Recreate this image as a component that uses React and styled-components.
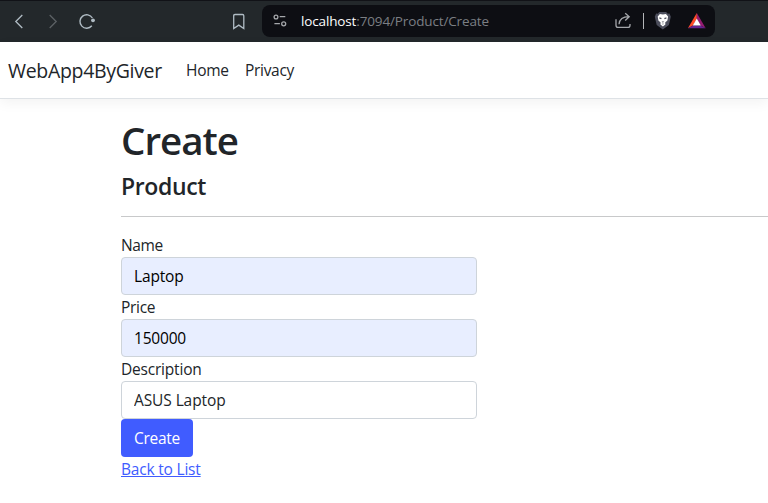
import React from "react";
import styled, { createGlobalStyle } from "styled-components";

const GlobalStyle = createGlobalStyle`
  *, *::before, *::after { box-sizing: border-box; }
  html, body { margin: 0; background: #fff; overflow: hidden; }
  body {
    font-family: "Open Sans", "Noto Sans", sans-serif;
    font-size: 15.5px;
    line-height: 24px;
    color: #212529;
  }
`;

const Page = styled.div`
  width: 100%;
  height: 503px;
  overflow: hidden;
`;

const BrowserBar = styled.div`
  display: flex;
  align-items: center;
  height: 42px;
  border-top: 1px solid #111217;
  background: #23282b;
`;

const ToolButton = styled.span`
  display: flex;
  flex: none;
  width: 20px;
  height: 20px;
  margin-left: ${(p) => p.$gap}px;
`;

const AddressBar = styled.div`
  display: flex;
  align-items: center;
  width: 453px;
  height: 32px;
  margin: -1px 0 0 13px;
  padding-right: 8px;
  border-radius: 8px;
  background: #0d0e13;
`;

const Address = styled.span`
  flex: 1;
  margin: 0 0 0 11px;
  font-size: 13.5px;
  letter-spacing: ${(p) => p.$spacing}px;
  line-height: 20px;
  color: #7b7e83;
`;

const Host = styled.span`
  color: #fff;
`;

const Separator = styled.span`
  width: 1px;
  height: 16px;
  margin: 0 0 0 10px;
  background: #b3b5b8;
`;

const Navbar = styled.nav`
  display: flex;
  align-items: center;
  height: 57px;
  padding-left: 8px;
  border-bottom: 1px solid #dee2e6;
  box-shadow: 0 4px 12px rgba(0, 0, 0, 0.05);
`;

const Brand = styled.a`
  width: 178px;
  padding-top: 2px;
  font-size: 19.5px;
  line-height: 30px;
  letter-spacing: ${(p) => p.$spacing}px;
`;

const NavLink = styled.a`
  width: 59px;
  letter-spacing: ${(p) => p.$spacing}px;
`;

const Main = styled.main`
  padding: 16px 0 0 121px;
`;

const Title = styled.h1`
  margin: 0 0 8px;
  padding-top: 1px;
  height: 48px;
  font-size: 38.5px;
  font-weight: 600;
  line-height: 48px;
  letter-spacing: ${(p) => p.$spacing}px;
`;

const Subtitle = styled.h4`
  margin: 0;
  padding-top: 1px;
  height: 29px;
  font-size: 23px;
  font-weight: 600;
  line-height: 29px;
  letter-spacing: ${(p) => p.$spacing}px;
`;

const Rule = styled.hr`
  height: 1px;
  margin: 16px 0;
  border: 0;
  background: #c8c9ca;
`;

const Form = styled.form`
  display: flex;
  flex-direction: column;
  align-items: flex-start;
  width: 356px;
`;

const Label = styled.label`
  height: 24px;
  letter-spacing: ${(p) => p.$spacing}px;
`;

const Input = styled.input`
  width: 100%;
  height: 38px;
  padding: 6px 12px;
  border: 1px solid #ced4da;
  border-radius: 4px;
  background: ${(p) => (p.$filled ? "#e8eeff" : "#fff")};
  color: ${(p) => (p.$filled ? "#000" : "#212529")};
  font: inherit;
  letter-spacing: ${(p) => p.$spacing}px;
  outline: none;
`;

const Submit = styled.button`
  width: 72px;
  height: 38px;
  padding: 0;
  border: 0;
  border-radius: 4px;
  background: #405cff;
  color: #fff;
  font: inherit;
  letter-spacing: ${(p) => p.$spacing}px;
`;

const BackLink = styled.a`
  color: #405cff;
  text-decoration: underline;
  text-underline-offset: 1px;
  letter-spacing: ${(p) => p.$spacing}px;
`;

const Icon = ({ children, color = "#b0bcc4", width = 1.3 }) => (
  <svg width="20" height="20" viewBox="0 0 20 20" fill="none" stroke={color} strokeWidth={width}>
    {children}
  </svg>
);

const fields = [
  { id: "name", label: "Name", value: "Laptop", filled: true, ls: -0.4, vs: -0.15 },
  { id: "price", label: "Price", value: "150000", filled: true, ls: -0.3, vs: -0.2 },
  { id: "description", label: "Description", value: "ASUS Laptop", filled: false, ls: -0.2, vs: -0.1 },
];

export default function App() {
  return (
    <Page>
      <GlobalStyle />
      <BrowserBar>
        <ToolButton $gap={9}>
          <Icon><path d="M13.3 3 6.8 9.5l6.5 6.5" /></Icon>
        </ToolButton>
        <ToolButton $gap={14}>
          <Icon color="#5c6165"><path d="m6.7 3 6.5 6.5-6.5 6.5" /></Icon>
        </ToolButton>
        <ToolButton $gap={14}>
          <Icon width={1.4}>
            <path d="M15.4 6A6.7 6.7 0 1 0 14.8 13.8" />
            <circle cx="16" cy="8.3" r="1.9" fill="#b0bcc4" stroke="none" />
          </Icon>
        </ToolButton>
        <ToolButton $gap={132}>
          <Icon><path d="M4.7 3.8q0-1.3 1.3-1.3h7.5q1.3 0 1.3 1.3v12.7L9.8 13.1l-5.1 3.4z" /></Icon>
        </ToolButton>
        <AddressBar>
          <ToolButton $gap={8}>
            <Icon color="#a5a7ab">
              <circle cx="6" cy="6" r="1.9" />
              <path d="M9.7 5.7h5.6M4.4 12.7h5.5" />
              <circle cx="13.7" cy="12.8" r="2" />
            </Icon>
          </ToolButton>
          <Address $spacing={-0.14}><Host>localhost</Host>:7094/Product/Create</Address>
          <ToolButton $gap={0}>
            <Icon color="#a5a7ab">
              <path d="M3 8.2v6q0 2.2 2.2 2.2h9.6q2.2 0 2.2-2.2v-1.3" />
              <path d="M6 13.2c.5-4.6 3.5-7.5 9.8-7.5M12.2 2.2l4 3.5-4 3.8" />
            </Icon>
          </ToolButton>
          <Separator />
          <ToolButton $gap={9}>
            <svg width="20" height="20" viewBox="0 0 20 20">
              <path d="m6.3 1h6.8l1.7 1.7 1.7-.1 1.3 3.1-1.9 8.2-6.1 4.6-6.1-4.6-1.9-8.2 1.3-3.1 1.6.1z" fill="#4c4e5c" />
              <path d="m6.9 3 3 .5 3-.5 2.2 2.4-.7 4-2.2 2.1.2 1.9-2.5 2.2-2.5-2.2.2-1.9-2.2-2.1-.7-4z" fill="#fff" />
              <path d="m6.4 6.2 2.3.8-.5 1.3-1.8-.6zm7 0-2.3.8.5 1.3 1.8-.6zM8.6 10.5h2.6l-1.3 1.3zM8.6 12.8h2.6l-1.3.8z" fill="#555762" />
            </svg>
          </ToolButton>
          <ToolButton $gap={14}>
            <svg width="20" height="20" viewBox="0 0 20 20">
              <path d="M9.8 2 .9 17.2 6 14.4 9.8 8z" fill="#ff4b27" />
              <path d="M9.8 2v6l3.8 6.4 5.1 2.8z" fill="#941b72" />
              <path d="M.9 17.2h17.8l-5.1-2.8H6z" fill="#662491" />
              <path d="m9.8 7.6-4 6.8h8z" fill="#fff" />
            </svg>
          </ToolButton>
        </AddressBar>
      </BrowserBar>
      <Navbar>
        <Brand $spacing={-0.32}>WebApp4ByGiver</Brand>
        <NavLink $spacing={-0.3}>Home</NavLink>
        <NavLink $spacing={-0.3}>Privacy</NavLink>
      </Navbar>
      <Main>
        <Title $spacing={-1}>Create</Title>
        <Subtitle $spacing={-0.35}>Product</Subtitle>
        <Rule />
        <Form>
          {fields.map((f) => (
            <React.Fragment key={f.id}>
              <Label htmlFor={f.id} $spacing={f.ls}>{f.label}</Label>
              <Input id={f.id} defaultValue={f.value} $filled={f.filled} $spacing={f.vs} />
            </React.Fragment>
          ))}
          <Submit type="button" $spacing={-0.25}>Create</Submit>
          <BackLink href="#" $spacing={-0.2}>Back to List</BackLink>
        </Form>
      </Main>
    </Page>
  );
}
